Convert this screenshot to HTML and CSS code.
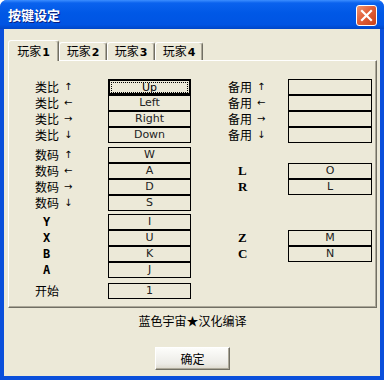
FILE: index.html
```html
<!DOCTYPE html>
<html>
<head>
<meta charset="utf-8">
<title>按键设定</title>
<link rel="stylesheet" href="styles.css">
</head>
<body>
<div class="window">
	<div class="titlebar">
		<span class="title">按键设定</span>
		<span class="close">
			<svg width="19" height="19" viewBox="0 0 19 19"><path d="M5 5 L14 14 M14 5 L5 14" stroke="#fff" stroke-width="2.2" stroke-linecap="square"/></svg>
		</span>
	</div>
	<div class="client">
		<div class="tabs">
			<div class="tab active">玩家<b>1</b></div>
			<div class="tab">玩家<b>2</b></div>
			<div class="tab">玩家<b>3</b></div>
			<div class="tab">玩家<b>4</b></div>
		</div>
		<div class="pane">
			<div class="group">
				<div class="lbl">类比<span class="arrow">↑</span></div>
				<div class="key focus"><span>Up</span></div>
				<div class="lbl alt">备用<span class="arrow">↑</span></div>
				<div class="key alt"></div>
				<div class="lbl">类比<span class="arrow">←</span></div>
				<div class="key">Left</div>
				<div class="lbl alt">备用<span class="arrow">←</span></div>
				<div class="key alt"></div>
				<div class="lbl">类比<span class="arrow">→</span></div>
				<div class="key">Right</div>
				<div class="lbl alt">备用<span class="arrow">→</span></div>
				<div class="key alt"></div>
				<div class="lbl">类比<span class="arrow">↓</span></div>
				<div class="key">Down</div>
				<div class="lbl alt">备用<span class="arrow">↓</span></div>
				<div class="key alt"></div>
			</div>
			<div class="group">
				<div class="lbl">数码<span class="arrow">↑</span></div>
				<div class="key">W</div>
				<div class="lbl">数码<span class="arrow">←</span></div>
				<div class="key">A</div>
				<div class="lbl alt letter serif">L</div>
				<div class="key alt">O</div>
				<div class="lbl">数码<span class="arrow">→</span></div>
				<div class="key">D</div>
				<div class="lbl alt letter serif">R</div>
				<div class="key alt">L</div>
				<div class="lbl">数码<span class="arrow">↓</span></div>
				<div class="key">S</div>
			</div>
			<div class="group tight">
				<div class="lbl letter">Y</div>
				<div class="key">I</div>
				<div class="lbl letter">X</div>
				<div class="key">U</div>
				<div class="lbl alt letter serif">Z</div>
				<div class="key alt">M</div>
				<div class="lbl letter">B</div>
				<div class="key">K</div>
				<div class="lbl alt letter serif">C</div>
				<div class="key alt">N</div>
				<div class="lbl letter">A</div>
				<div class="key">J</div>
			</div>
			<div class="group start">
				<div class="lbl">开始</div>
				<div class="key">1</div>
			</div>
		</div>
		<div class="credit">蓝色宇宙★汉化编译</div>
		<div class="actions"><button class="ok">确定</button></div>
	</div>
</div>
</body>
</html>
```

FILE: styles.css
```css
*
{
	box-sizing:border-box;
}

body
{
	margin:0;
	background-color:#ffffff;
	font-family:"Noto Sans CJK SC", sans-serif;
	font-size:12px;
	color:#000000;
}

.window
{
	width:384px;
	height:380px;
	background-color:#0A4FDB;
	border-radius:7px 7px 0 0;
	overflow:hidden;
}

.titlebar
{
	height:29px;
	display:flex;
	justify-content:space-between;
	align-items:flex-start;
	padding:5px 7px 0 8px;
	background:linear-gradient(#3C8EFF 0, #0A62EE 3px, #0058E6 45%, #0054E3 85%, #0046C8 100%);
}

.title
{
	color:#ffffff;
	font-weight:bold;
	font-size:13px;
	line-height:19px;
	text-shadow:1px 1px #0A1E80;
}

.close
{
	width:21px;
	height:21px;
	display:flex;
	align-items:center;
	justify-content:center;
	border:1px solid #ffffff;
	border-radius:3px;
	background:linear-gradient(135deg, #F0956E 0, #E2603A 45%, #C8411A 100%);
}

.client
{
	margin:0 4px;
	height:347px;
	background-color:#ECE9D8;
	padding:11px 3px 0 4px;
}

.tabs
{
	display:flex;
	align-items:flex-end;
	height:20px;
}

.tab
{
	width:48px;
	height:18px;
	border:1px solid;
	border-color:#ffffff #716F64 transparent #ffffff;
	border-bottom:none;
	border-radius:3px 3px 0 0;
	text-align:center;
	line-height:16px;
	box-shadow:inset -1px 0 #ACA899;
}

.tab b
{
	font-family:"DejaVu Sans", sans-serif;
	font-size:11px;
	margin-left:1px;
}

.tab.active
{
	width:51px;
	height:21px;
	margin-bottom:-1px;
	position:relative;
	z-index:1;
	background-color:#ECE9D8;
	line-height:19px;
}

.pane
{
	height:248px;
	border:1px solid;
	border-color:#ffffff #716F64 #716F64 #ffffff;
	box-shadow:inset -1px -1px #ACA899;
	padding:18px 0 0 26px;
	display:flex;
	flex-direction:column;
	gap:4px;
}

.group
{
	display:grid;
	grid-template-columns:73px 83px 37px 60px 84px;
	grid-auto-rows:16px;
}

.group.tight
{
	margin-top:-1px;
}

.group.start
{
	margin-top:1px;
}

.lbl
{
	grid-column:1;
	display:flex;
	align-items:center;
	line-height:16px;
}

.lbl.alt
{
	grid-column:4;
}

.arrow
{
	font-family:"DejaVu Sans", sans-serif;
	font-size:10px;
	margin-left:5px;
}

.letter
{
	font-family:"DejaVu Sans Mono", monospace;
	font-weight:bold;
	font-size:12px;
	padding-left:8px;
}

.letter.serif
{
	font-family:"Liberation Serif", serif;
	font-size:13px;
	padding-left:10px;
}

.key
{
	grid-column:2;
	border:1px solid #000000;
	text-align:center;
	font-family:"DejaVu Sans", sans-serif;
	font-size:11px;
	line-height:14px;
	color:#222222;
}

.key.alt
{
	grid-column:5;
}

.key.focus
{
	border-width:2px;
	padding:1px 1px 0 1px;
	color:#000000;
}

.key.focus span
{
	display:block;
	height:11px;
	border:1px dotted #000000;
	line-height:10px;
	overflow:hidden;
}

.credit
{
	text-align:center;
	margin-top:6px;
	line-height:14px;
}

.actions
{
	display:flex;
	justify-content:center;
	margin-top:19px;
}

.ok
{
	width:75px;
	height:23px;
	font-family:"Noto Sans CJK SC", sans-serif;
	font-size:12px;
	border:1px solid;
	border-color:#ffffff #716F64 #716F64 #ffffff;
	box-shadow:inset -1px -1px #ACA899;
	background:linear-gradient(#FDFDFB, #ECEBE6 75%, #DCD8CC);
	padding:0;
}
```
